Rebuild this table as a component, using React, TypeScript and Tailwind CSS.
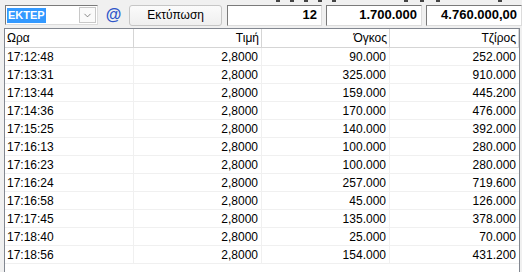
import { ChevronDown } from "lucide-react";

const rows: [string, string, string, string][] = [
  ["17:12:48", "2,8000", "90.000", "252.000"],
  ["17:13:31", "2,8000", "325.000", "910.000"],
  ["17:13:44", "2,8000", "159.000", "445.200"],
  ["17:14:36", "2,8000", "170.000", "476.000"],
  ["17:15:25", "2,8000", "140.000", "392.000"],
  ["17:16:13", "2,8000", "100.000", "280.000"],
  ["17:16:23", "2,8000", "100.000", "280.000"],
  ["17:16:24", "2,8000", "257.000", "719.600"],
  ["17:16:58", "2,8000", "45.000", "126.000"],
  ["17:17:45", "2,8000", "135.000", "378.000"],
  ["17:18:40", "2,8000", "25.000", "70.000"],
  ["17:18:56", "2,8000", "154.000", "431.200"],
];

// tails of the labels that sit above the toolbar, cut off by the window
const tails = [276, 290, 304, 318, 332, 404, 420, 436, 498];

function Field({ value, w }: { value: string; w: string }) {
  return (
    <div
      className={`${w} h-[21px] bg-white border border-[#7a7a7a] border-r-[#dcdcdc] border-b-[#dcdcdc] flex items-center justify-end pr-1 font-bold text-[13px] text-black`}
    >
      {value}
    </div>
  );
}

export default function App() {
  return (
    <div
      className="w-[522px] h-[272px] bg-[#f0f0f0] overflow-hidden text-[12px] text-black"
      style={{ fontFamily: '"Liberation Sans", Arial, sans-serif' }}
    >
      <div className="h-[3px] relative">
        {tails.map((x) => (
          <div key={x} className="absolute top-0 w-[4px] h-[2px] bg-[#444]" style={{ left: x }} />
        ))}
      </div>

      {/* toolbar */}
      <div className="flex items-center h-[24px] pl-[5px] gap-[4px]">
        <div className="w-[96px] h-[20px] bg-white border border-[#7a7a7a] border-r-[#dcdcdc] border-b-[#dcdcdc] flex items-center pl-[1px]">
          <span className="bg-[#3399ff] text-white font-bold text-[11px] px-[1px] h-[15px] leading-[15px] whitespace-nowrap">
            EKTEP
          </span>
          <div className="flex-1" />
          <div className="w-[17px] h-[16px] mr-[1px] border border-[#c8c8c8] bg-[#fafafa] flex items-center justify-center">
            <ChevronDown size={11} strokeWidth={1.5} className="text-[#555]" />
          </div>
        </div>
        <span className="w-[20px] text-center text-[#2f56c9] font-bold text-[16px] leading-none ml-[2px]">@</span>
        <button className="w-[96px] h-[21px] ml-[2px] rounded-[3px] border border-[#c6c6c6] bg-gradient-to-b from-[#fbfbfb] to-[#efefef] text-[12px] text-black">
          Εκτύπωση
        </button>
        <div className="ml-[1px] flex gap-[4px]">
          <Field value="12" w="w-[95px]" />
          <Field value="1.700.000" w="w-[96px]" />
          <Field value="4.760.000,00" w="w-[96px]" />
        </div>
      </div>

      {/* grid */}
      <div className="mt-[1px] ml-[4px] w-[516px] h-[250px] bg-white border border-[#828790]">
        <div className="grid grid-cols-[129px_128px_128px_129px] h-[19px] border-b border-[#d5d5d5] bg-white">
          <div className="pl-[2px] flex items-center border-r border-[#d5d5d5]">Ωρα</div>
          <div className="pr-[2px] flex items-center justify-end border-r border-[#d5d5d5]">Τιμή</div>
          <div className="pr-[2px] flex items-center justify-end border-r border-[#d5d5d5]">Όγκος</div>
          <div className="pr-[2px] flex items-center justify-end border-r border-[#d5d5d5]">Τζίρος</div>
        </div>
        {rows.map((r, i) => (
          <div key={i} className="grid grid-cols-[129px_128px_128px_129px] h-[18px] border-b border-[#f0f0f0]">
            <div className="pl-[2px] flex items-center border-r border-[#f0f0f0]">{r[0]}</div>
            <div className="pr-[3px] flex items-center justify-end border-r border-[#f0f0f0]">{r[1]}</div>
            <div className="pr-[3px] flex items-center justify-end border-r border-[#f0f0f0]">{r[2]}</div>
            <div className="pr-[3px] flex items-center justify-end">{r[3]}</div>
          </div>
        ))}
      </div>
    </div>
  );
}
